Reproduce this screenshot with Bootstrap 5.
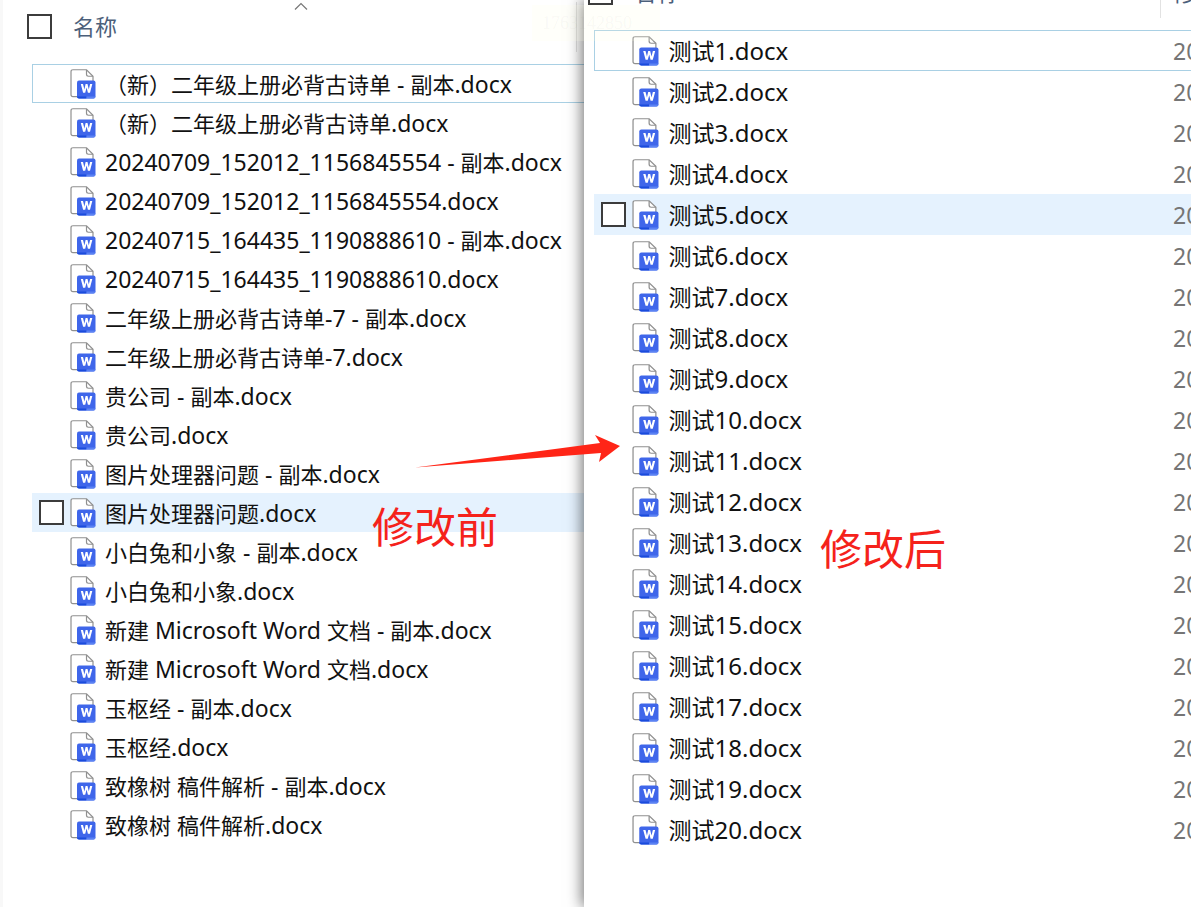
<!DOCTYPE html>
<html lang="zh-CN">
<head>
<meta charset="utf-8">
<meta name="viewport" content="width=device-width, initial-scale=1">
<title>批量重命名对比</title>
<link href="https://cdn.jsdelivr.net/npm/bootstrap@5.3.0/dist/css/bootstrap.min.css" rel="stylesheet">
<style>
  body { font-family: "Noto Sans", "Noto Sans CJK SC", sans-serif; color: #111; background: #fff; }
  .pane { min-width: 0; background: #fff; }
  .pane-before { flex: 0 0 49%; border-left: 3px solid #f8f8f8; --row: 39px; --icon: 26px; --latin: 23px; font-size: 22px; }
  .pane-after { flex: 1 1 0; box-shadow: -2px 0 14px rgba(0, 0, 0, .55); --row: 41px; --icon: 27px; --latin: 24px; font-size: 23px; }
  .pane-head { color: #4c607a; line-height: 24px; }
  .pane-before .pane-head { height: 64px; padding: 14px 0 0 24px; }
  .pane-after .pane-head { height: 50px; margin-top: -20px; padding-left: 4px; }
  .pane-before .file-area { padding-left: 29px; margin-right: -4px; }
  .pane-after .file-area { padding-left: 10px; margin-right: -4px; }
  .file-table { border-collapse: separate; border-spacing: 0; table-layout: fixed; line-height: 30px; }
  .file-table td { height: var(--row); padding: 0; vertical-align: middle; white-space: nowrap; }
  .file-table tr.focused { outline: 1px solid #a9d0e4; outline-offset: -1px; }
  .file-table tr.hovered { background: #e5f2fe; }
  .latin { font-size: var(--latin); }
  .col-tick { width: 38px; }
  .pane-before .col-icon { width: 35px; }
  .pane-after .col-icon { width: 37px; }
  .col-date { width: 22px; }
  .date-cell { color: #757575; overflow: hidden; }
  .file-icon { display: block; width: var(--icon); height: 30px; }
  .box-tick { appearance: none; display: block; width: 25px; height: 25px; margin: 0; border: 2px solid #3c3c3c; background: #fff; }
  .td-tick .box-tick { margin-left: 7px; }
  .head-label { padding-left: 21px; }
  .head-rule { width: 1px; background: #e2e2e2; }
  .sort-mark { left: 291px; top: 2px; }
  .rule-before { right: 7px; top: 2px; height: 50px; }
  .rule-after { right: 30px; top: 0; height: 38px; }
  .head-date { right: 0; top: 0; width: 18px; overflow: hidden; white-space: nowrap; }
  .note-text { color: #f5221b; font-size: 42px; line-height: 50px; white-space: nowrap; }
  .note-before { left: 372px; top: 502px; }
  .note-after { left: 820px; top: 524px; }
  .note-arrow { left: 414px; top: 432px; }
  .stamp { left: 532px; top: 5px; width: 128px; padding: 8px 10px; background: rgba(255, 255, 225, .18); color: rgba(120, 120, 90, .05); font: 18px/20px "Liberation Serif", serif; pointer-events: none; }
</style>
</head>
<body>
<svg width="0" height="0" class="position-absolute" aria-hidden="true">
  <symbol id="doc" viewBox="0 0 26 31" preserveAspectRatio="none">
    <path d="M3 .8H16.5L23 7.5V28.500H3Q1 28.500 1 26.500V2.800Q1 .8 3 .8Z" fill="#fff" stroke="#909090" stroke-width="1.200"/>
    <path d="M16.500 1V5.500Q16.500 7.500 18.500 7.500H23" fill="none" stroke="#909090" stroke-width="1.200"/>
    <rect x="7" y="12" width="18.500" height="18.500" rx="2" fill="#3f66ea"/>
    <path d="M7 28.500H16.500V30.500H9Q7 30.500 7 28.500Z" fill="#1a4bdc"/>
    <path d="M16.500 28.500H25.500Q25.500 30.500 23.500 30.500H16.500Z" fill="#5b82f3"/>
    <path d="M10.800 15.500H13L14.400 21.300L15.600 15.500H17.500L18.800 21.300L20.100 15.500H22.300L20 24.500H17.900L16.600 19L15.200 24.500H13.100Z" fill="#fff"/>
  </symbol>
</svg>

<main class="d-flex min-vh-100 position-relative overflow-hidden">
  <section class="pane pane-before" aria-label="修改前">
    <div class="pane-head d-flex position-relative">
      <input type="checkbox" class="box-tick" id="all-before">
      <label for="all-before" class="head-label">名称</label>
      <svg class="position-absolute sort-mark" width="14" height="9" viewBox="0 0 14 9" aria-hidden="true"><path d="M1 7.500L7 1.500L13 7.500" fill="none" stroke="#777" stroke-width="1.200"/></svg>
      <span class="head-rule rule-before position-absolute"></span>
    </div>
    <div class="file-area">
      <table class="file-table w-100">
        <colgroup><col class="col-tick"><col class="col-icon"><col></colgroup>
        <tbody id="before-rows"></tbody>
      </table>
    </div>
  </section>

  <section class="pane pane-after position-relative" aria-label="修改后">
    <div class="pane-head d-flex position-relative">
      <input type="checkbox" class="box-tick" id="all-after">
      <label for="all-after" class="head-label">名称</label>
      <span class="head-rule rule-after position-absolute"></span>
      <span class="head-date position-absolute">修</span>
    </div>
    <div class="file-area">
      <table class="file-table w-100">
        <colgroup><col class="col-tick"><col class="col-icon"><col><col class="col-date"></colgroup>
        <tbody id="after-rows"></tbody>
      </table>
    </div>
  </section>

  <div class="stamp position-absolute">1763142850</div>
  <svg class="note-arrow position-absolute" width="208" height="38" viewBox="0 0 208 38" aria-hidden="true"><path d="M1 35.500L186 11L181 3L206 14L185 30L187 21Z" fill="#ff2517"/></svg>
  <div class="note-text note-before position-absolute">修改前</div>
  <div class="note-text note-after position-absolute">修改后</div>
</main>

<script src="https://cdn.jsdelivr.net/npm/bootstrap@5.3.0/dist/js/bootstrap.bundle.min.js"></script>
<script>
  const before = [
    "（新）二年级上册必背古诗单 - 副本", "（新）二年级上册必背古诗单",
    "20240709_152012_1156845554 - 副本", "20240709_152012_1156845554",
    "20240715_164435_1190888610 - 副本", "20240715_164435_1190888610",
    "二年级上册必背古诗单-7 - 副本", "二年级上册必背古诗单-7",
    "贵公司 - 副本", "贵公司", "图片处理器问题 - 副本", "图片处理器问题",
    "小白兔和小象 - 副本", "小白兔和小象",
    "新建 Microsoft Word 文档 - 副本", "新建 Microsoft Word 文档",
    "玉枢经 - 副本", "玉枢经", "致橡树 稿件解析 - 副本", "致橡树 稿件解析"
  ];
  const after = Array.from({ length: 20 }, (_, i) => "测试" + (i + 1));
  // Latin runs are set one pixel larger than the Chinese around them
  const mixed = text => text.replace(/[\x20-\x7e]+/g, run => `<span class="latin">${run}</span>`);
  function fill(id, names, hovered, date) {
    document.getElementById(id).innerHTML = names.map((name, i) => `
      <tr class="${i === 0 ? "focused" : i === hovered ? "hovered" : ""}">
        <td class="td-tick">${i === hovered ? `<input type="checkbox" class="box-tick" aria-label="${name}.docx">` : ""}</td>
        <td><svg class="file-icon" aria-hidden="true"><use href="#doc"/></svg></td>
        <td>${mixed(name + ".docx")}</td>${date ? `<td class="date-cell">${date}</td>` : ""}
      </tr>`).join("");
  }
  fill("before-rows", before, 11, "");
  fill("after-rows", after, 4, "20");
</script>
</body>
</html>
